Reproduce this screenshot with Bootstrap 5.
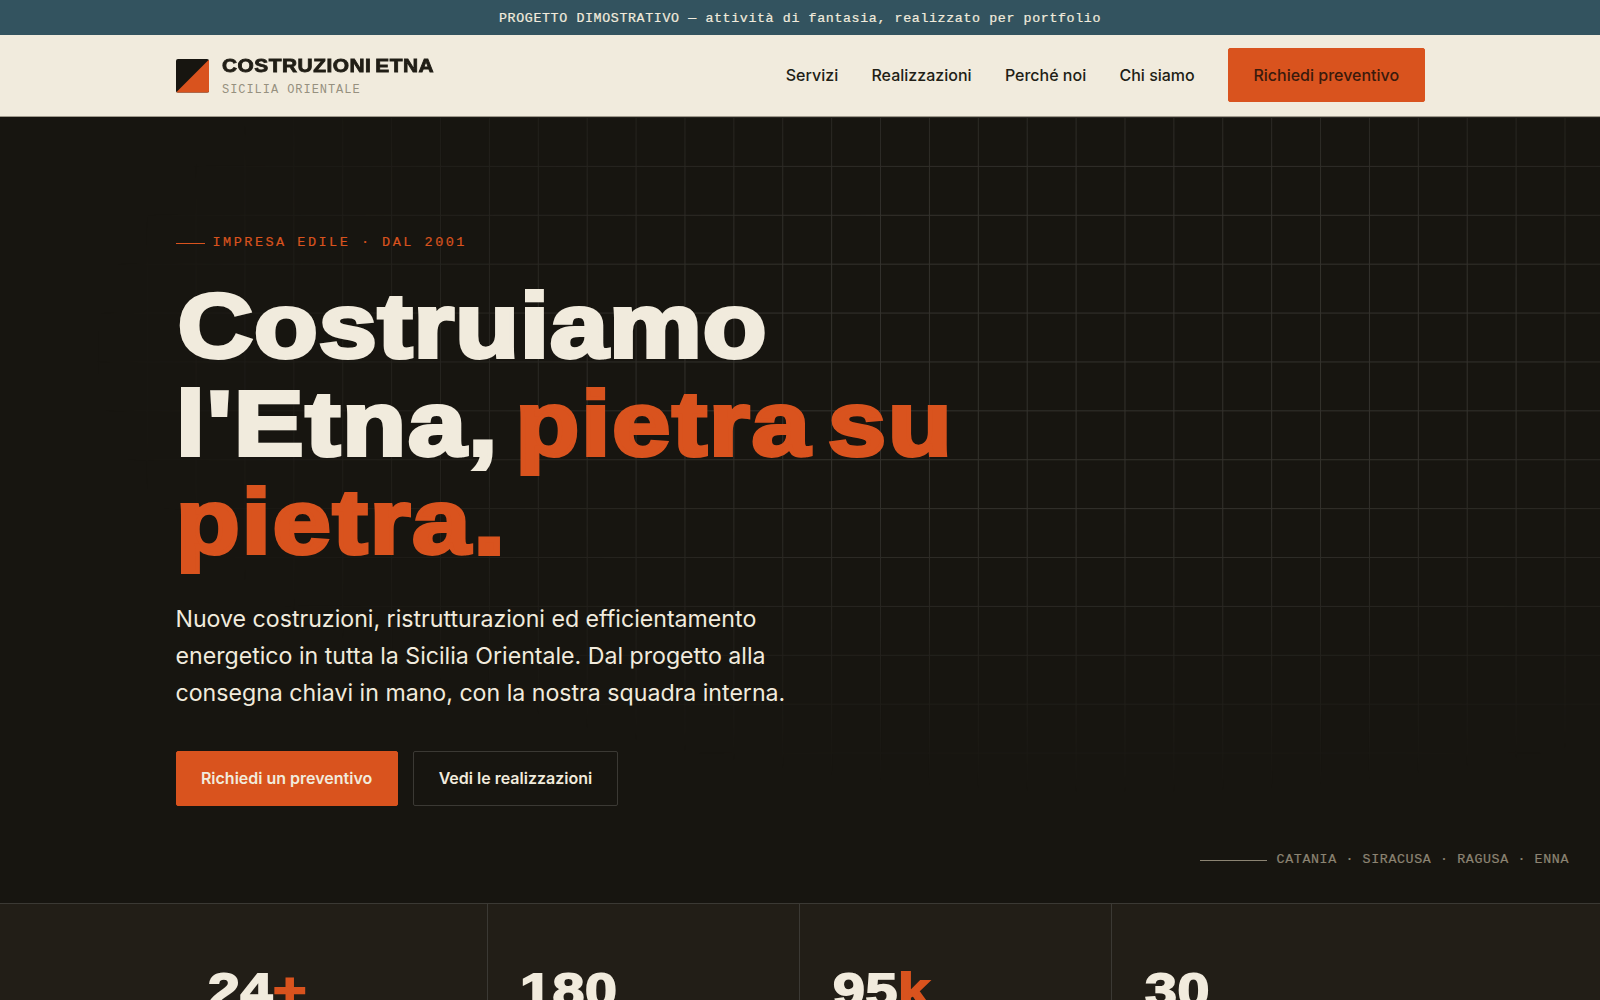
<!DOCTYPE html>
<html lang="it">
<head>
<meta charset="utf-8">
<meta name="viewport" content="width=device-width, initial-scale=1">
<title>Costruzioni Etna</title>
<link href="https://cdn.jsdelivr.net/npm/bootstrap@5.3.0/dist/css/bootstrap.min.css" rel="stylesheet">
<style>
:root{--ink:#171510;--stone:#221e17;--cream:#f1ebdd;--lava:#d9531e;--mono:"Liberation Mono",monospace;--display:"Liberation Sans",Arial,sans-serif}
body{font-family:Inter,sans-serif;background:var(--ink);color:var(--cream);overflow:hidden;height:1000px}
.shell{width:1249px;margin:0 auto}
.demo-bar,.eyebrow,.places{-webkit-text-stroke:.2px currentColor}
.demo-bar{height:35px;background:#33535f;font:400 13.3px/37px var(--mono);letter-spacing:.62px}
.site-nav{height:82px;background:var(--cream);border-bottom:1px solid #a09a8c;padding:0 0 1px;color:#211e16}
.logo-mark{width:33.5px;height:33.5px;border-radius:2px;margin-top:2px}
.logo-text{margin-left:13px;gap:7px;padding-top:3px}
.logo-name{font:700 18px/20px var(--display);-webkit-text-stroke:.8px currentColor;letter-spacing:.43px;word-spacing:-2px;white-space:nowrap;transform:scaleX(1.16);transform-origin:left}
.logo-sub{font:400 12px/14px var(--mono);letter-spacing:.95px;color:#96907f}
.nav-links{gap:33.3px}
.site-nav .nav-link{color:#211e16;font-weight:500;font-size:16px;padding:0}
.btn-etna{--bs-btn-padding-x:24.4px;--bs-btn-padding-y:0;--bs-btn-border-radius:2px;height:54.5px;line-height:53px;font-size:16px;font-weight:600;white-space:nowrap}
.btn-lava,.btn-lava:hover{background:var(--lava);border-color:var(--lava);color:var(--cream)}
.btn-dark-text,.btn-dark-text:hover{color:#3a1a0c;font-weight:500}
.btn-line{border-color:#3b3934;color:var(--cream)}
.hero{height:786px;padding-top:114px}
.hero-grid{inset:0;background-image:linear-gradient(to right,#34322d 1px,transparent 1px),linear-gradient(to bottom,#34322d 1px,transparent 1px);background-size:48.9px 48.9px;-webkit-mask-image:radial-gradient(ellipse 80% 70% at 70% 30%,#000 30%,transparent 80%);mask-image:radial-gradient(ellipse 80% 70% at 70% 30%,#000 30%,transparent 80%)}
.eyebrow{font:400 13.5px/24px var(--mono);letter-spacing:2.5px;color:var(--lava)}
.eyebrow i{width:29px;height:1px;background:var(--lava);margin-right:8px}
.headline{font:700 91.5px/97.8px var(--display);-webkit-text-stroke:4px currentColor;letter-spacing:1.8px;word-spacing:-13px;margin:22px 0 0;white-space:nowrap;transform:scaleX(1.14);transform-origin:left}
.headline .first-line{letter-spacing:.9px;margin-left:1.5px}
.headline .end-stop{margin-left:2px;-webkit-text-stroke-width:6px}
.lava-text{color:var(--lava)}
.intro{font-size:23.15px;line-height:37.3px;margin:30.5px 0 0;white-space:nowrap}
.actions{gap:15.6px;margin-top:38.3px}
.places{right:31px;bottom:31px;font:400 13.3px/24px var(--mono);letter-spacing:.62px;color:#8c8473}
.places i{width:67px;height:1px;background:#8c8473;margin-right:10px}
.figures{background:var(--stone);border-top:1px solid #3b3934;height:97px}
.figure-cell{width:25%;padding:56px 0 0 32.5px;height:96px;border-right:1px solid #3b3934}
.figure-cell:last-child{border-right:0}
.figure-num{font:700 49px/60px var(--display);-webkit-text-stroke:1.8px currentColor;letter-spacing:.5px;white-space:nowrap;transform:scaleX(1.17);transform-origin:left}
</style>
</head>
<body>
<div class="demo-bar text-center">PROGETTO DIMOSTRATIVO — attività di fantasia, realizzato per portfolio</div>
<nav class="site-nav navbar">
  <div class="shell d-flex align-items-center justify-content-between">
    <a class="d-flex align-items-center text-decoration-none text-reset" href="#">
      <svg class="logo-mark" viewBox="0 0 34 34"><path fill="#171510" d="M0 0h34v34H0z"/><path fill="#d9531e" d="M34 0v34H0z"/></svg>
      <span class="d-flex flex-column logo-text"><span class="logo-name">COSTRUZIONI ETNA</span><span class="logo-sub">SICILIA ORIENTALE</span></span>
    </a>
    <div class="d-flex align-items-center nav-links">
      <a class="nav-link" href="#">Servizi</a>
      <a class="nav-link" href="#">Realizzazioni</a>
      <a class="nav-link" href="#">Perché noi</a>
      <a class="nav-link" href="#">Chi siamo</a>
      <a class="btn btn-etna btn-lava btn-dark-text" href="#">Richiedi preventivo</a>
    </div>
  </div>
</nav>
<header class="hero position-relative">
  <div class="hero-grid position-absolute"></div>
  <div class="shell position-relative">
    <div class="eyebrow d-flex align-items-center"><i></i>IMPRESA EDILE · DAL 2001</div>
    <h1 class="headline"><span class="first-line">Costruiamo</span><br>l'Etna, <span class="lava-text">pietra su<br>pietra<span class="end-stop">.</span></span></h1>
    <p class="intro">Nuove costruzioni, ristrutturazioni ed efficientamento<br>energetico in tutta la Sicilia Orientale. Dal progetto alla<br>consegna chiavi in mano, con la nostra squadra interna.</p>
    <div class="d-flex actions">
      <a class="btn btn-etna btn-lava" href="#">Richiedi un preventivo</a>
      <a class="btn btn-etna btn-line" href="#">Vedi le realizzazioni</a>
    </div>
  </div>
  <div class="places position-absolute d-flex align-items-center"><i></i>CATANIA · SIRACUSA · RAGUSA · ENNA</div>
</header>
<section class="figures">
  <div class="shell d-flex">
    <div class="figure-cell"><div class="figure-num">24<span class="lava-text">+</span></div></div>
    <div class="figure-cell"><div class="figure-num">180</div></div>
    <div class="figure-cell"><div class="figure-num">95<span class="lava-text">k</span></div></div>
    <div class="figure-cell"><div class="figure-num">30</div></div>
  </div>
</section>
<script src="https://cdn.jsdelivr.net/npm/bootstrap@5.3.0/dist/js/bootstrap.bundle.min.js"></script>
</body>
</html>
